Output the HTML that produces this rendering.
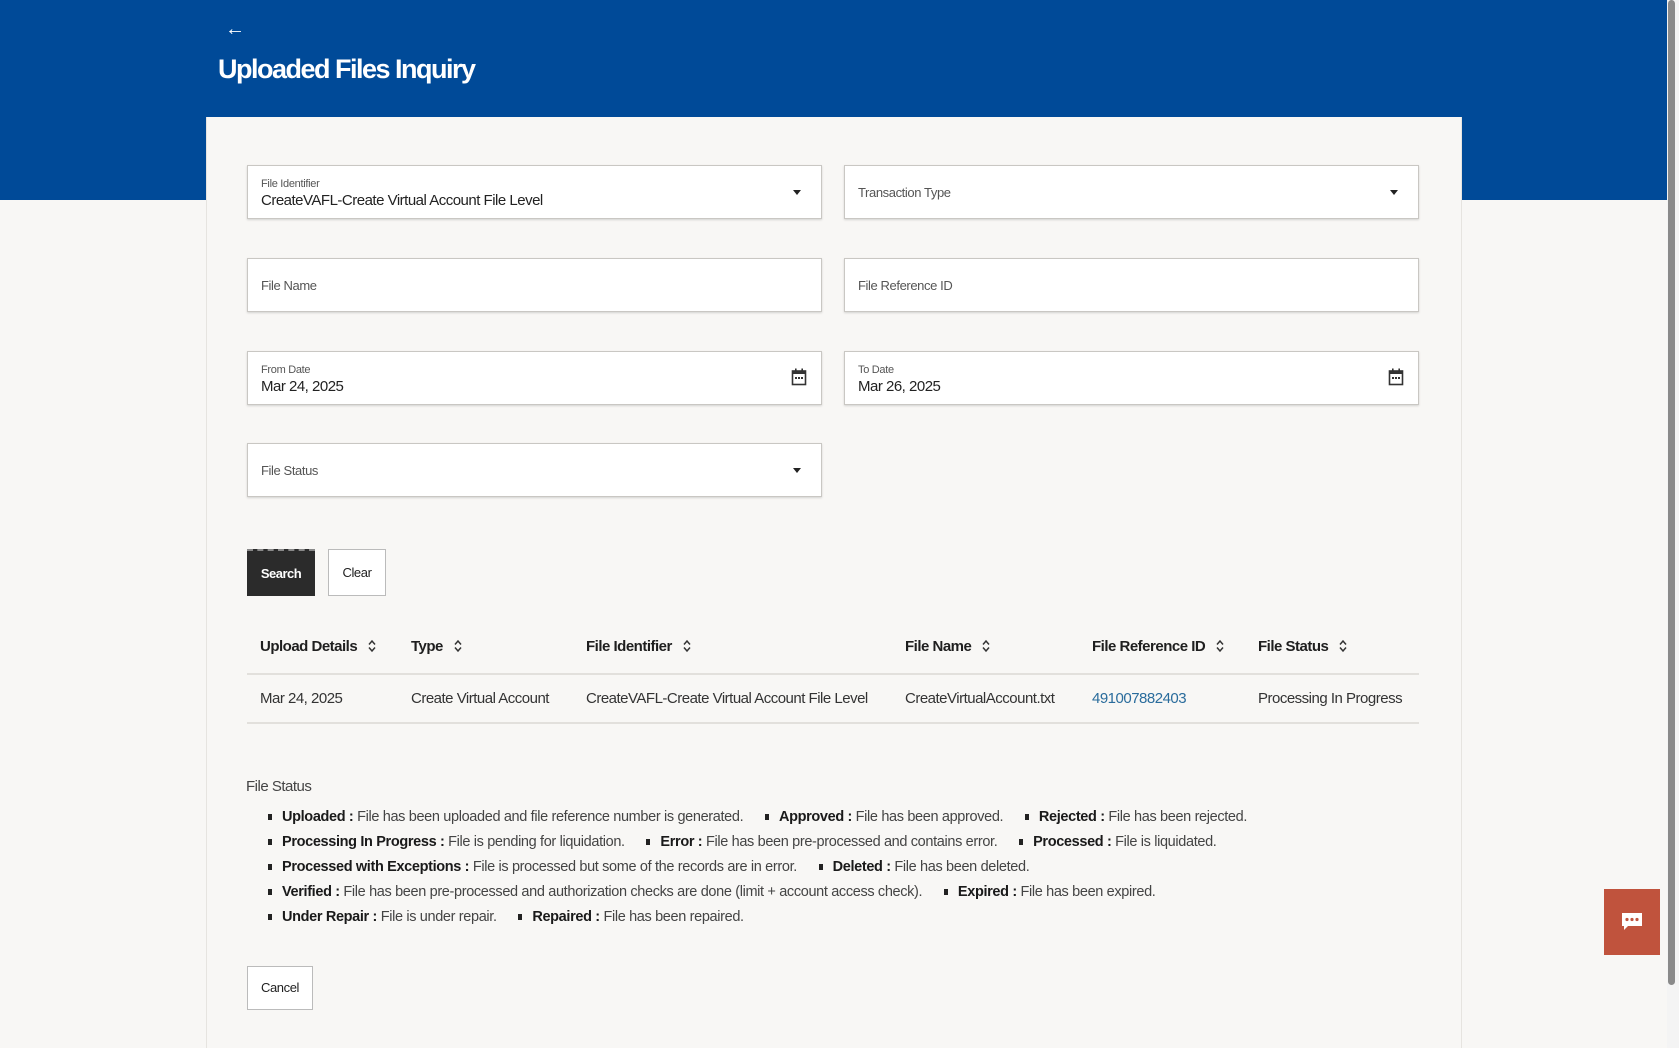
<!DOCTYPE html>
<html><head><meta charset="utf-8"><style>
*{margin:0;padding:0;box-sizing:border-box}
body{width:1679px;height:1048px;background:#f8f7f5;font-family:"Liberation Sans",sans-serif;color:#1f1f1f;position:relative;overflow:hidden}
.a{position:absolute;white-space:nowrap}
.hdr{left:0;top:0;width:1667px;height:200px;background:#004a98}
.card{left:206px;top:117px;width:1256px;height:931px;background:#f8f7f5;border-left:1px solid #e6e4e0;border-right:1px solid #e6e4e0}
.f{position:absolute;width:575px;height:54px;background:#fff;border:1px solid #c9c7c3;box-shadow:0 1px 2px rgba(0,0,0,.15)}
.f .l{position:absolute;left:13px;top:12px;font-size:11px;color:#555;letter-spacing:-.3px}
.f .v{position:absolute;left:13px;top:26px;font-size:15px;color:#222;letter-spacing:-.5px}
.f .p{position:absolute;left:13px;top:19px;font-size:13px;color:#555;letter-spacing:-.4px}
.car{position:absolute;right:20px;top:24px;width:0;height:0;border-left:4px solid transparent;border-right:4px solid transparent;border-top:5px solid #222}
.th{font-size:15px;font-weight:bold;letter-spacing:-.5px;top:638px}
.td{font-size:15px;letter-spacing:-.5px;top:690px;color:#333}
.s{display:inline-block;width:10px;height:14px;margin-left:10px;vertical-align:-2px}
.b{font-size:14.5px;letter-spacing:-.35px;color:#444;left:268px}
.b b{color:#1a1a1a}
.b i{display:inline-block;width:4px;height:6px;background:#222;margin:0 10px 1px 0;vertical-align:middle}
.b i.m{margin-left:18px}
</style></head><body>
<div class="a hdr"></div>
<div class="a" style="left:225px;top:18px;color:#fff;font-size:20px;font-weight:bold">&#8592;</div>
<div class="a" style="left:218px;top:54px;color:#fff;font-size:27px;font-weight:bold;letter-spacing:-1.5px">Uploaded Files Inquiry</div>
<div class="a card"></div>
<div class="f" style="left:247px;top:165px"><span class="l">File Identifier</span><span class="v">CreateVAFL-Create Virtual Account File Level</span><span class="car"></span></div>
<div class="f" style="left:844px;top:165px"><span class="p">Transaction Type</span><span class="car"></span></div>
<div class="f" style="left:247px;top:258px"><span class="p">File Name</span></div>
<div class="f" style="left:844px;top:258px"><span class="p">File Reference ID</span></div>
<div class="f" style="left:247px;top:351px"><span class="l">From Date</span><span class="v">Mar 24, 2025</span>
<svg style="position:absolute;right:14px;top:16px" width="16" height="18" viewBox="0 0 16 18"><rect x="1.5" y="3" width="13" height="13.5" fill="none" stroke="#333" stroke-width="1.6"/><rect x="1.5" y="3" width="13" height="3" fill="#333"/><rect x="4" y="0.5" width="1.6" height="4" fill="#333"/><rect x="10.4" y="0.5" width="1.6" height="4" fill="#333"/><rect x="4" y="9" width="2" height="2" fill="#333"/><rect x="7" y="9" width="2" height="2" fill="#333"/><rect x="10" y="9" width="2" height="2" fill="#333"/></svg></div>
<div class="f" style="left:844px;top:351px"><span class="l">To Date</span><span class="v">Mar 26, 2025</span>
<svg style="position:absolute;right:14px;top:16px" width="16" height="18" viewBox="0 0 16 18"><rect x="1.5" y="3" width="13" height="13.5" fill="none" stroke="#333" stroke-width="1.6"/><rect x="1.5" y="3" width="13" height="3" fill="#333"/><rect x="4" y="0.5" width="1.6" height="4" fill="#333"/><rect x="10.4" y="0.5" width="1.6" height="4" fill="#333"/><rect x="4" y="9" width="2" height="2" fill="#333"/><rect x="7" y="9" width="2" height="2" fill="#333"/><rect x="10" y="9" width="2" height="2" fill="#333"/></svg></div>
<div class="f" style="left:247px;top:443px"><span class="p">File Status</span><span class="car"></span></div>
<div class="a" style="left:247px;top:549px;width:68px;height:47px;background:#2b2b2b;color:#fff;font-size:13px;font-weight:bold;letter-spacing:-.5px;text-align:center;line-height:45px;border-top:2px dashed #888">Search</div>
<div class="a" style="left:328px;top:549px;width:58px;height:47px;background:#fff;border:1px solid #bbb;font-size:13px;letter-spacing:-.4px;text-align:center;line-height:45px">Clear</div>
<svg width="0" height="0" style="position:absolute"><defs><symbol id="srt" viewBox="0 0 10 14"><path d="M2 5.5 L5 2 L8 5.5 M2 8.5 L5 12 L8 8.5" fill="none" stroke="#333" stroke-width="1.5"/></symbol></defs></svg>
<div class="a th" style="left:260px">Upload Details<svg class="s"><use href="#srt"/></svg></div>
<div class="a th" style="left:411px">Type<svg class="s"><use href="#srt"/></svg></div>
<div class="a th" style="left:586px">File Identifier<svg class="s"><use href="#srt"/></svg></div>
<div class="a th" style="left:905px">File Name<svg class="s"><use href="#srt"/></svg></div>
<div class="a th" style="left:1092px">File Reference ID<svg class="s"><use href="#srt"/></svg></div>
<div class="a th" style="left:1258px">File Status<svg class="s"><use href="#srt"/></svg></div>
<div class="a" style="left:247px;top:673px;width:1172px;height:2px;background:#e2e0dc"></div>
<div class="a td" style="left:260px">Mar 24, 2025</div>
<div class="a td" style="left:411px">Create Virtual Account</div>
<div class="a td" style="left:586px">CreateVAFL-Create Virtual Account File Level</div>
<div class="a td" style="left:905px">CreateVirtualAccount.txt</div>
<div class="a td" style="left:1092px;color:#2a6c9c">491007882403</div>
<div class="a td" style="left:1258px">Processing In Progress</div>
<div class="a" style="left:247px;top:722px;width:1172px;height:2px;background:#e2e0dc"></div>
<div class="a" style="left:246px;top:778px;font-size:15px;letter-spacing:-.5px;color:#444">File Status</div>
<div class="a b" style="top:809px"><i></i><b>Uploaded :</b> File has been uploaded and file reference number is generated. <i class="m"></i><b>Approved :</b> File has been approved. <i class="m"></i><b>Rejected :</b> File has been rejected.</div>
<div class="a b" style="top:834px"><i></i><b>Processing In Progress :</b> File is pending for liquidation. <i class="m"></i><b>Error :</b> File has been pre-processed and contains error. <i class="m"></i><b>Processed :</b> File is liquidated.</div>
<div class="a b" style="top:859px"><i></i><b>Processed with Exceptions :</b> File is processed but some of the records are in error. <i class="m"></i><b>Deleted :</b> File has been deleted.</div>
<div class="a b" style="top:884px"><i></i><b>Verified :</b> File has been pre-processed and authorization checks are done (limit + account access check). <i class="m"></i><b>Expired :</b> File has been expired.</div>
<div class="a b" style="top:909px"><i></i><b>Under Repair :</b> File is under repair. <i class="m"></i><b>Repaired :</b> File has been repaired.</div>
<div class="a" style="left:247px;top:966px;width:66px;height:44px;background:#fff;border:1px solid #bbb;font-size:13px;letter-spacing:-.4px;text-align:center;line-height:42px">Cancel</div>
<div class="a" style="left:1604px;top:889px;width:56px;height:66px;background:#c0533d"></div>
<svg class="a" style="left:1621px;top:912px" width="22" height="20" viewBox="0 0 22 20"><path d="M1 1 H21 V14 H7 L3 18 V14 H1 Z" fill="#fff"/><circle cx="6" cy="7.5" r="1.6" fill="#c0533d"/><circle cx="11" cy="7.5" r="1.6" fill="#c0533d"/><circle cx="16" cy="7.5" r="1.6" fill="#c0533d"/></svg>
<div class="a" style="left:1667px;top:0;width:12px;height:1048px;background:#f4f4f4"></div>
<div class="a" style="left:1668px;top:0;width:7px;height:985px;background:#8a8a8a;border-radius:4px"></div>
</body></html>
